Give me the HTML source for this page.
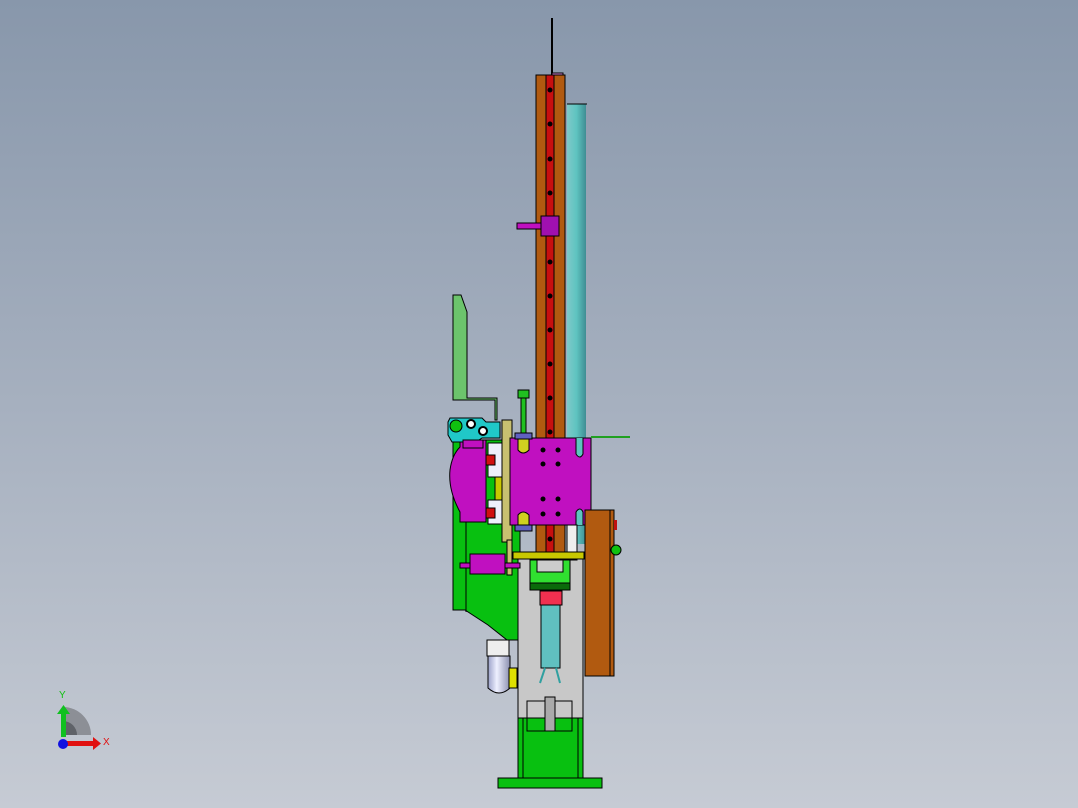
<!DOCTYPE html>
<html><head><meta charset="utf-8"><style>
html,body{margin:0;padding:0}
body{width:1078px;height:808px;overflow:hidden;background:linear-gradient(#8897ab 0%,#a6b0bf 50%,#c6cbd4 100%)}
svg{display:block}
</style></head><body>
<svg width="1078" height="808" viewBox="0 0 1078 808" xmlns="http://www.w3.org/2000/svg" stroke="#000" stroke-width="1">
<defs>
<linearGradient id="cy" x1="0" x2="1"><stop offset="0" stop-color="#7fc9c9"/><stop offset=".5" stop-color="#5ec4c0"/><stop offset="1" stop-color="#3f8d93"/></linearGradient>
<linearGradient id="fl" x1="0" x2="1"><stop offset="0" stop-color="#9aa0c8"/><stop offset=".4" stop-color="#eef0ff"/><stop offset="1" stop-color="#8c90b0"/></linearGradient>
</defs>
<!-- top rod -->
<line x1="552" y1="18" x2="552" y2="75" stroke-width="2"/>
<rect x="552" y="73" width="11" height="3" fill="#d080d0"/>
<!-- cylinder -->
<rect x="567" y="104" width="19" height="440" fill="url(#cy)" stroke="none"/>
<line x1="567" y1="104" x2="587" y2="104"/>
<!-- orange column -->
<rect x="536" y="75" width="29" height="490" fill="#b15a10"/>
<rect x="546" y="75" width="8" height="490" fill="#c80f0f"/>
<g fill="#000" stroke="none">
<circle cx="550" cy="90" r="2.5"/><circle cx="550" cy="124" r="2.5"/><circle cx="550" cy="159" r="2.5"/><circle cx="550" cy="193" r="2.5"/><circle cx="550" cy="262" r="2.5"/><circle cx="550" cy="296" r="2.5"/><circle cx="550" cy="330" r="2.5"/><circle cx="550" cy="364" r="2.5"/><circle cx="550" cy="398" r="2.5"/><circle cx="550" cy="432" r="2.5"/><circle cx="550" cy="539" r="2.5"/>
</g>
<!-- bracket -->
<rect x="517" y="223" width="28" height="6" fill="#c010c0"/>
<rect x="541" y="216" width="18" height="20" fill="#a010b0"/>
<!-- green flag plate -->
<path d="M453 295 H461 L467 312 V398 H497 V420 H495 V400 H453 Z" fill="#6cc46c"/>
<!-- green left body -->
<path d="M453 440 H520 V640 H507 L488 625 L465 610 H453 Z" fill="#08c010"/>
<line x1="466" y1="520" x2="466" y2="612"/>
<!-- magenta rounded -->
<path d="M460 440 H486 V522 H460 V512 Q448 490 450 470 Q452 455 460 447 Z" fill="#c010c0"/>
<!-- white/red blocks -->
<rect x="488" y="443" width="14" height="34" fill="#eef0fb"/><rect x="486" y="455" width="9" height="10" fill="#d01010"/>
<rect x="488" y="500" width="14" height="24" fill="#eef0fb"/><rect x="486" y="508" width="9" height="10" fill="#d01010"/>
<rect x="495" y="477" width="7" height="23" fill="#c8c800"/>
<!-- cyan clamp -->
<path d="M450 418 H482 L486 422 H500 V438 H482 L476 442 H452 L448 435 V422 Z" fill="#20c8c8"/>
<circle cx="456" cy="426" r="6" fill="#10c010"/>
<circle cx="471" cy="424" r="4" fill="#fff" stroke-width="2"/><circle cx="483" cy="431" r="4" fill="#fff" stroke-width="2"/>
<rect x="463" y="440" width="20" height="8" fill="#c010c0"/>
<!-- tan plate -->
<rect x="502" y="420" width="10" height="122" fill="#c8c070"/>
<rect x="507" y="540" width="5" height="35" fill="#c8c070"/>
<!-- green rod -->
<rect x="521" y="392" width="5" height="45" fill="#20c020"/>
<rect x="518" y="390" width="11" height="8" fill="#20c020"/>
<!-- magenta block -->
<path d="M510 438 H591 V525 H510 Z" fill="#c010c0"/>
<path d="M576 438 V454 Q580 460 583 454 V438" fill="#5ec4c0"/>
<path d="M576 525 V512 Q580 506 583 512 V525" fill="#5ec4c0"/>
<path d="M518 438 V450 Q523 456 529 450 V438 Z" fill="#d0d020"/>
<path d="M518 525 V515 Q523 509 529 515 V525 Z" fill="#d0d020"/>
<rect x="515" y="433" width="17" height="6" fill="#6060c0"/>
<rect x="515" y="525" width="17" height="6" fill="#6060c0"/>
<g fill="#000" stroke="none"><circle cx="543" cy="450" r="2.5"/><circle cx="558" cy="450" r="2.5"/><circle cx="543" cy="464" r="2.5"/><circle cx="558" cy="464" r="2.5"/><circle cx="543" cy="499" r="2.5"/><circle cx="558" cy="499" r="2.5"/><circle cx="543" cy="514" r="2.5"/><circle cx="558" cy="514" r="2.5"/></g>
<path d="M591 437 H630" stroke="#20a020" stroke-width="2"/>
<!-- right orange block -->
<rect x="585" y="510" width="29" height="166" fill="#b15a10"/>
<line x1="610" y1="510" x2="610" y2="676"/>
<circle cx="616" cy="550" r="5" fill="#10c010"/>
<rect x="614" y="520" width="3" height="10" fill="#c01010" stroke="none"/>
<!-- gray column -->
<rect x="518" y="555" width="65" height="165" fill="#c8c8c8"/>
<rect x="567" y="525" width="10" height="35" fill="#eee"/>
<!-- green base -->
<rect x="518" y="718" width="65" height="62" fill="#08c010"/>
<line x1="523" y1="718" x2="523" y2="780"/><line x1="578" y1="718" x2="578" y2="780"/>
<rect x="498" y="778" width="104" height="10" fill="#08c010"/>
<rect x="527" y="701" width="45" height="30" fill="none"/>
<rect x="545" y="697" width="10" height="34" fill="#aaa"/>
<!-- yellow bar -->
<rect x="513" y="552" width="71" height="7" fill="#c8c800"/>
<!-- green inner -->
<rect x="530" y="560" width="40" height="30" fill="#30e030"/>
<rect x="537" y="560" width="26" height="12" fill="#ccc"/>
<rect x="530" y="583" width="40" height="7" fill="#0a6a0a"/>
<rect x="540" y="591" width="22" height="14" fill="#f03050"/>
<rect x="541" y="605" width="19" height="63" fill="#60c0c0"/>
<path d="M545 668 L540 683 M556 668 L560 683" stroke="#30a0a0" stroke-width="2"/>
<!-- magenta left lower -->
<rect x="460" y="563" width="60" height="5" fill="#c010c0"/>
<rect x="470" y="554" width="35" height="20" fill="#c010c0"/>
<!-- filter -->
<rect x="487" y="640" width="22" height="16" fill="#eee"/>
<path d="M488 656 H510 V688 Q499 698 488 688 Z" fill="url(#fl)"/>
<rect x="509" y="668" width="8" height="20" fill="#e0e000"/>
<!-- axis triad -->
<path d="M63 707 A28 28 0 0 1 91 735 H63 Z" fill="#8c8f96" stroke="none"/>
<path d="M63 721 A14 14 0 0 1 77 735 H63 Z" fill="#5f6268" stroke="none"/>
<rect x="61" y="712" width="5" height="25" fill="#10c020" stroke="none"/>
<path d="M57 714 L63.5 705 L70 714 Z" fill="#10c020" stroke="none"/>
<rect x="63" y="741" width="30" height="5" fill="#e01010" stroke="none"/>
<path d="M93 737 L101 743.5 L93 750 Z" fill="#e01010" stroke="none"/>
<circle cx="63" cy="744" r="5" fill="#1010e0" stroke="none"/>
<text x="59" y="698" font-family="Liberation Sans, sans-serif" font-size="10" fill="#10c010" stroke="none">Y</text>
<text x="103" y="745" font-family="Liberation Sans, sans-serif" font-size="10" fill="#e01010" stroke="none">X</text>
</svg>
</body></html>
